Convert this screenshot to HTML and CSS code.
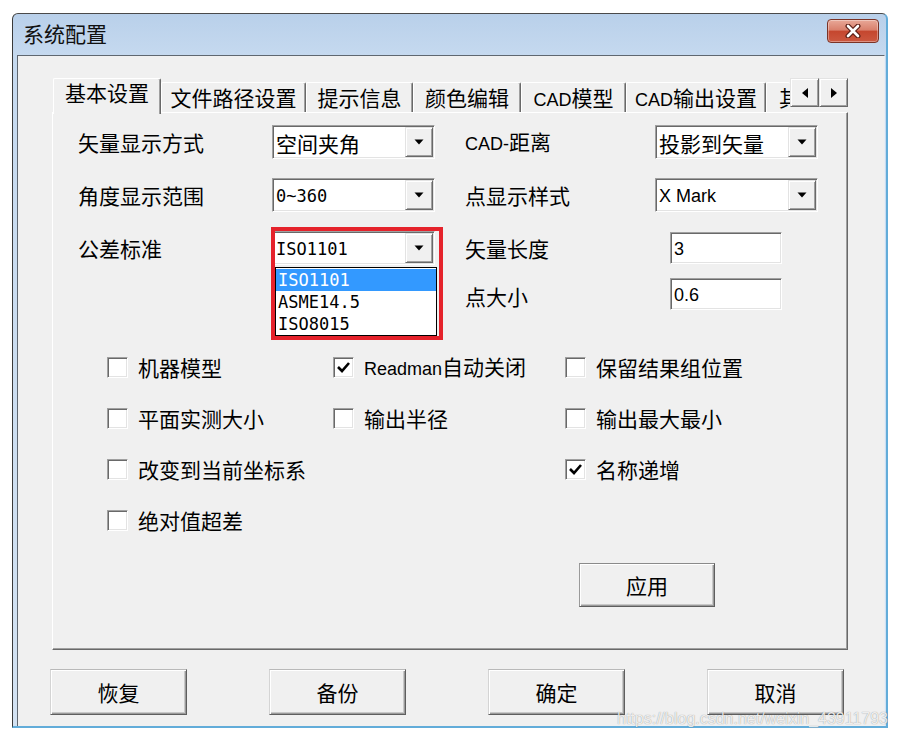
FILE: index.html
```html
<!DOCTYPE html>
<html lang="zh-CN">
<head>
<meta charset="utf-8">
<title>系统配置</title>
<link rel="stylesheet" href="styles.css">
</head>
<body>
<div class="window">
  <div class="titlebar">
    <span class="title">系统配置</span>
    <div class="close" aria-label="关闭">
      <svg width="18" height="14" viewBox="0 0 18 14">
        <path d="M4 2 L14 12 M14 2 L4 12" stroke="#5b1f16" stroke-width="5" stroke-linecap="round" fill="none"/>
        <path d="M4 2 L14 12 M14 2 L4 12" stroke="#ffffff" stroke-width="2.6" stroke-linecap="round" fill="none"/>
      </svg>
    </div>
  </div>
  <div class="client">
    <div class="tabs">
      <div class="tabstrip">
        <div class="tab tab-active t1">基本设置</div>
        <div class="tab t2">文件路径设置</div>
        <div class="tab t3">提示信息</div>
        <div class="tab t4">颜色编辑</div>
        <div class="tab t5"><span class="lat">CAD</span>模型</div>
        <div class="tab t6"><span class="lat">CAD</span>输出设置</div>
        <div class="tab t7"><span class="clip">其他设置</span></div>
        <div class="arrows">
          <div class="arrow raised"><svg width="6" height="10" viewBox="0 0 6 10"><polygon points="6,0 6,10 0,5" fill="#000"/></svg></div>
          <div class="arrow raised"><svg width="6" height="10" viewBox="0 0 6 10"><polygon points="0,0 0,10 6,5" fill="#000"/></svg></div>
        </div>
      </div>
      <div class="panel">
        <div class="form">
          <div class="lbl">矢量显示方式</div>
          <div class="field combo"><span class="val">空间夹角</span><span class="dd raised"><svg width="10" height="6" viewBox="0 0 10 6"><polygon points="0.5,0.5 9.5,0.5 5,5.5" fill="#000"/></svg></span></div>
          <div class="lbl c4"><span class="lat">CAD-</span>距离</div>
          <div class="field combo c5"><span class="val">投影到矢量</span><span class="dd raised"><svg width="10" height="6" viewBox="0 0 10 6"><polygon points="0.5,0.5 9.5,0.5 5,5.5" fill="#000"/></svg></span></div>

          <div class="lbl">角度显示范围</div>
          <div class="field combo"><span class="val mono">0~360</span><span class="dd raised"><svg width="10" height="6" viewBox="0 0 10 6"><polygon points="0.5,0.5 9.5,0.5 5,5.5" fill="#000"/></svg></span></div>
          <div class="lbl c4">点显示样式</div>
          <div class="field combo c5"><span class="val lat">X Mark</span><span class="dd raised"><svg width="10" height="6" viewBox="0 0 10 6"><polygon points="0.5,0.5 9.5,0.5 5,5.5" fill="#000"/></svg></span></div>

          <div class="lbl">公差标准</div>
          <div class="field combo"><span class="val mono">ISO1101</span><span class="dd raised"><svg width="10" height="6" viewBox="0 0 10 6"><polygon points="0.5,0.5 9.5,0.5 5,5.5" fill="#000"/></svg></span></div>
          <div class="lbl c4">矢量长度</div>
          <div class="field edit c5"><span class="val lat">3</span></div>

          <div class="lbl c4 r4">点大小</div>
          <div class="field edit c5 r4"><span class="val lat">0.6</span></div>
        </div>

        <div class="checks">
          <div class="chk"><span class="cb"></span><span>机器模型</span></div>
          <div class="chk"><span class="cb"><svg width="15" height="13" viewBox="0 0 15 13"><polyline points="2,6 6,10 13,2" stroke="#000" stroke-width="2.6" fill="none"/></svg></span><span><span class="lat">Readman</span>自动关闭</span></div>
          <div class="chk"><span class="cb"></span><span>保留结果组位置</span></div>

          <div class="chk"><span class="cb"></span><span>平面实测大小</span></div>
          <div class="chk"><span class="cb"></span><span>输出半径</span></div>
          <div class="chk"><span class="cb"></span><span>输出最大最小</span></div>

          <div class="chk"><span class="cb"></span><span>改变到当前坐标系</span></div>
          <div class="chk col3"><span class="cb"><svg width="15" height="13" viewBox="0 0 15 13"><polyline points="2,6 6,10 13,2" stroke="#000" stroke-width="2.6" fill="none"/></svg></span><span>名称递增</span></div>

          <div class="chk"><span class="cb"></span><span>绝对值超差</span></div>
        </div>

        <div class="apply-row"><div class="btn apply">应用</div></div>

        <ul class="droplist">
          <li class="sel">ISO1101</li>
          <li>ASME14.5</li>
          <li>ISO8015</li>
        </ul>
        <div class="callout"></div>
      </div>
    </div>
    <div class="footer">
      <div class="btn">恢复</div>
      <div class="btn">备份</div>
      <div class="btn">确定</div>
      <div class="btn">取消</div>
    </div>
  </div>
  <div class="watermark">https://blog.csdn.net/weixin_43911793</div>
</div>
</body>
</html>
```
FILE: styles.css
```css
* { box-sizing: border-box; }
html, body { margin: 0; padding: 0; }
body {
  background: #ffffff;
  padding: 13px 0 0 12px;
  width: 898px;
  height: 739px;
  overflow: hidden;
  font-family: "Noto Sans CJK SC", sans-serif;
  font-size: 21px;
  line-height: 24px;
  color: #000;
}
.lat { font-family: "Liberation Sans", Arial, sans-serif; font-size: 18px; }
.mono { font-family: "DejaVu Sans Mono", monospace; font-size: 17px; }

.window {
  position: relative;
  width: 876px;
  height: 715px;
  display: flex;
  flex-direction: column;
  border-left: 1px solid #3a3a3a;
  border-top: 1px solid #4a4a4a;
  border-right: 2px solid #62acd9;
  border-bottom: 2px solid #62acd9;
  border-radius: 6px 6px 0 0;
  background: linear-gradient(#b9d0ea, #c5d9ef 41px, #d3e2f2);
  padding: 0 1px 0 4px;
}
.titlebar {
  height: 41px;
  display: flex;
  justify-content: space-between;
  align-items: flex-start;
}
.title {
  margin: 7px 0 0 6px;
  line-height: 24px;
  color: #111;
}
.close {
  width: 52px;
  height: 24px;
  margin: 5px 6px 0 0;
  border: 1px solid #7b3326;
  border-radius: 4px;
  background: linear-gradient(#e8a898, #d9806c 45%, #c5472f 52%, #cc5840 100%);
  box-shadow: inset 0 0 0 1px rgba(255,255,255,0.35);
  display: flex;
  align-items: center;
  justify-content: center;
}

.client {
  flex: 1;
  background: #f0f0f0;
  border-left: 1px solid #5f6770;
  border-top: 1px solid #5f6770;
  border-right: 1px solid #e8eef4;
}
.tabs { margin: 22px 0 0 34px; }
.tabstrip {
  position: relative;
  z-index: 1;
  display: flex;
  align-items: flex-end;
  height: 34px;
  margin-left: 1px;
}
.tab {
  height: 30px;
  padding-top: 2px;
  border-top: 1px solid #ffffff;
  border-left: 1px solid #ffffff;
  border-right: 1px solid #696969;
  box-shadow: inset -1px 0 #a0a0a0;
  border-radius: 2px 2px 0 0;
  background: #f0f0f0;
  text-align: center;
  white-space: nowrap;
  flex: none;
}
.tab-active {
  height: 36px;
  padding-top: 1px;
  margin-bottom: -2px;
}
.t1 { width: 108px; }
.t2 { width: 145px; }
.t3 { width: 107px; }
.t4 { width: 108px; }
.t5 { width: 105px; }
.t6 { width: 140px; }
.t7 { width: 24px; text-align: left; padding-left: 12px; border-right: none; box-shadow: none; }
.clip { display: block; width: 11px; overflow: hidden; line-height: 28px; margin-top: -2px; }
.arrows { display: flex; align-self: flex-start; height: 29px; }
.arrow {
  width: 29px;
  height: 29px;
  display: flex;
  align-items: center;
  justify-content: center;
}
.raised {
  background: #f0f0f0;
  border: 1px solid;
  border-color: #e3e3e3 #696969 #696969 #e3e3e3;
  box-shadow: inset 1px 1px #ffffff, inset -1px -1px #a0a0a0;
}

.panel {
  position: relative;
  width: 796px;
  height: 538px;
  border: 1px solid;
  border-color: #ffffff #696969 #696969 #ffffff;
  box-shadow: inset -1px -1px #a0a0a0;
  padding: 12px 0 0 25px;
}
.form {
  display: grid;
  grid-template-columns: 194px 163px 30px 190px 163px;
  grid-template-rows: 34px 34px 34px 33px;
  row-gap: 19px;
  align-items: center;
}
.lbl { grid-column: 1; white-space: nowrap; }
.c4 { grid-column: 4; }
.c5 { grid-column: 5; }
.r4 { align-self: start; margin-top: -6px; }
.lbl.r4 { line-height: 36px; }

.field {
  display: flex;
  background: #ffffff;
  border: 1px solid;
  border-color: #a0a0a0 #ffffff #ffffff #a0a0a0;
  box-shadow: inset 1px 1px #696969, inset -1px -1px #e3e3e3;
  padding: 1px;
}
.combo { height: 34px; }
.val {
  flex: 1;
  padding-left: 2px;
  line-height: 32px;
  white-space: nowrap;
}
.dd {
  width: 28px;
  display: flex;
  align-items: center;
  justify-content: center;
}
.edit {
  width: 112px;
  height: 32px;
  margin-left: 15px;
}
.edit .val { line-height: 30px; }

.checks {
  display: grid;
  grid-template-columns: 226px 232px 240px;
  grid-auto-rows: 30px;
  row-gap: 21px;
  margin: 35px 0 0 29px;
}
.chk {
  display: flex;
  align-items: center;
  gap: 10px;
  white-space: nowrap;
}
.col3 { grid-column: 3; }
.cb {
  flex: none;
  width: 21px;
  height: 21px;
  background: #ffffff;
  border: 1px solid;
  border-color: #a0a0a0 #ffffff #ffffff #a0a0a0;
  box-shadow: inset 1px 1px #696969, inset -1px -1px #e3e3e3;
  display: flex;
  align-items: center;
  justify-content: center;
}

.btn {
  width: 137px;
  height: 46px;
  display: flex;
  align-items: center;
  justify-content: center;
  background: #f0f0f0;
  border: 1px solid;
  border-color: #b9b9b9 #5e5e5e #5e5e5e #d4d4d4;
  box-shadow: inset 1px 1px #ffffff, inset -1px -1px #9a9a9a, inset -2px -2px #c8c8c8;
}
.apply-row { margin: 28px 0 0 501px; }
.apply { width: 136px; height: 44px; border-color: #8a8a8a #5e5e5e #5e5e5e #9a9a9a; }

.droplist {
  position: absolute;
  left: 222px;
  top: 154px;
  width: 162px;
  margin: 0;
  padding: 1px 0 0 0;
  list-style: none;
  background: #ffffff;
  border: 1px solid #000;
  font-family: "DejaVu Sans Mono", monospace;
  font-size: 17px;
}
.droplist li {
  height: 22px;
  line-height: 22px;
  padding-left: 2px;
}
.droplist li.sel { background: #3399ff; color: #ffffff; }
.callout {
  position: absolute;
  left: 218px;
  top: 114px;
  width: 172px;
  height: 113px;
  border: 4px solid #e5222b;
}

.footer {
  display: flex;
  gap: 82px;
  margin-top: 19px;
  padding-left: 32px;
}

.watermark {
  position: absolute;
  left: 604px;
  top: 696px;
  font-family: "Liberation Sans", Arial, sans-serif;
  font-size: 16px;
  line-height: 18px;
  white-space: nowrap;
  color: rgba(255, 255, 255, 0.85);
  text-shadow: 0 0 1px rgba(0, 0, 0, 0.45);
}
```
